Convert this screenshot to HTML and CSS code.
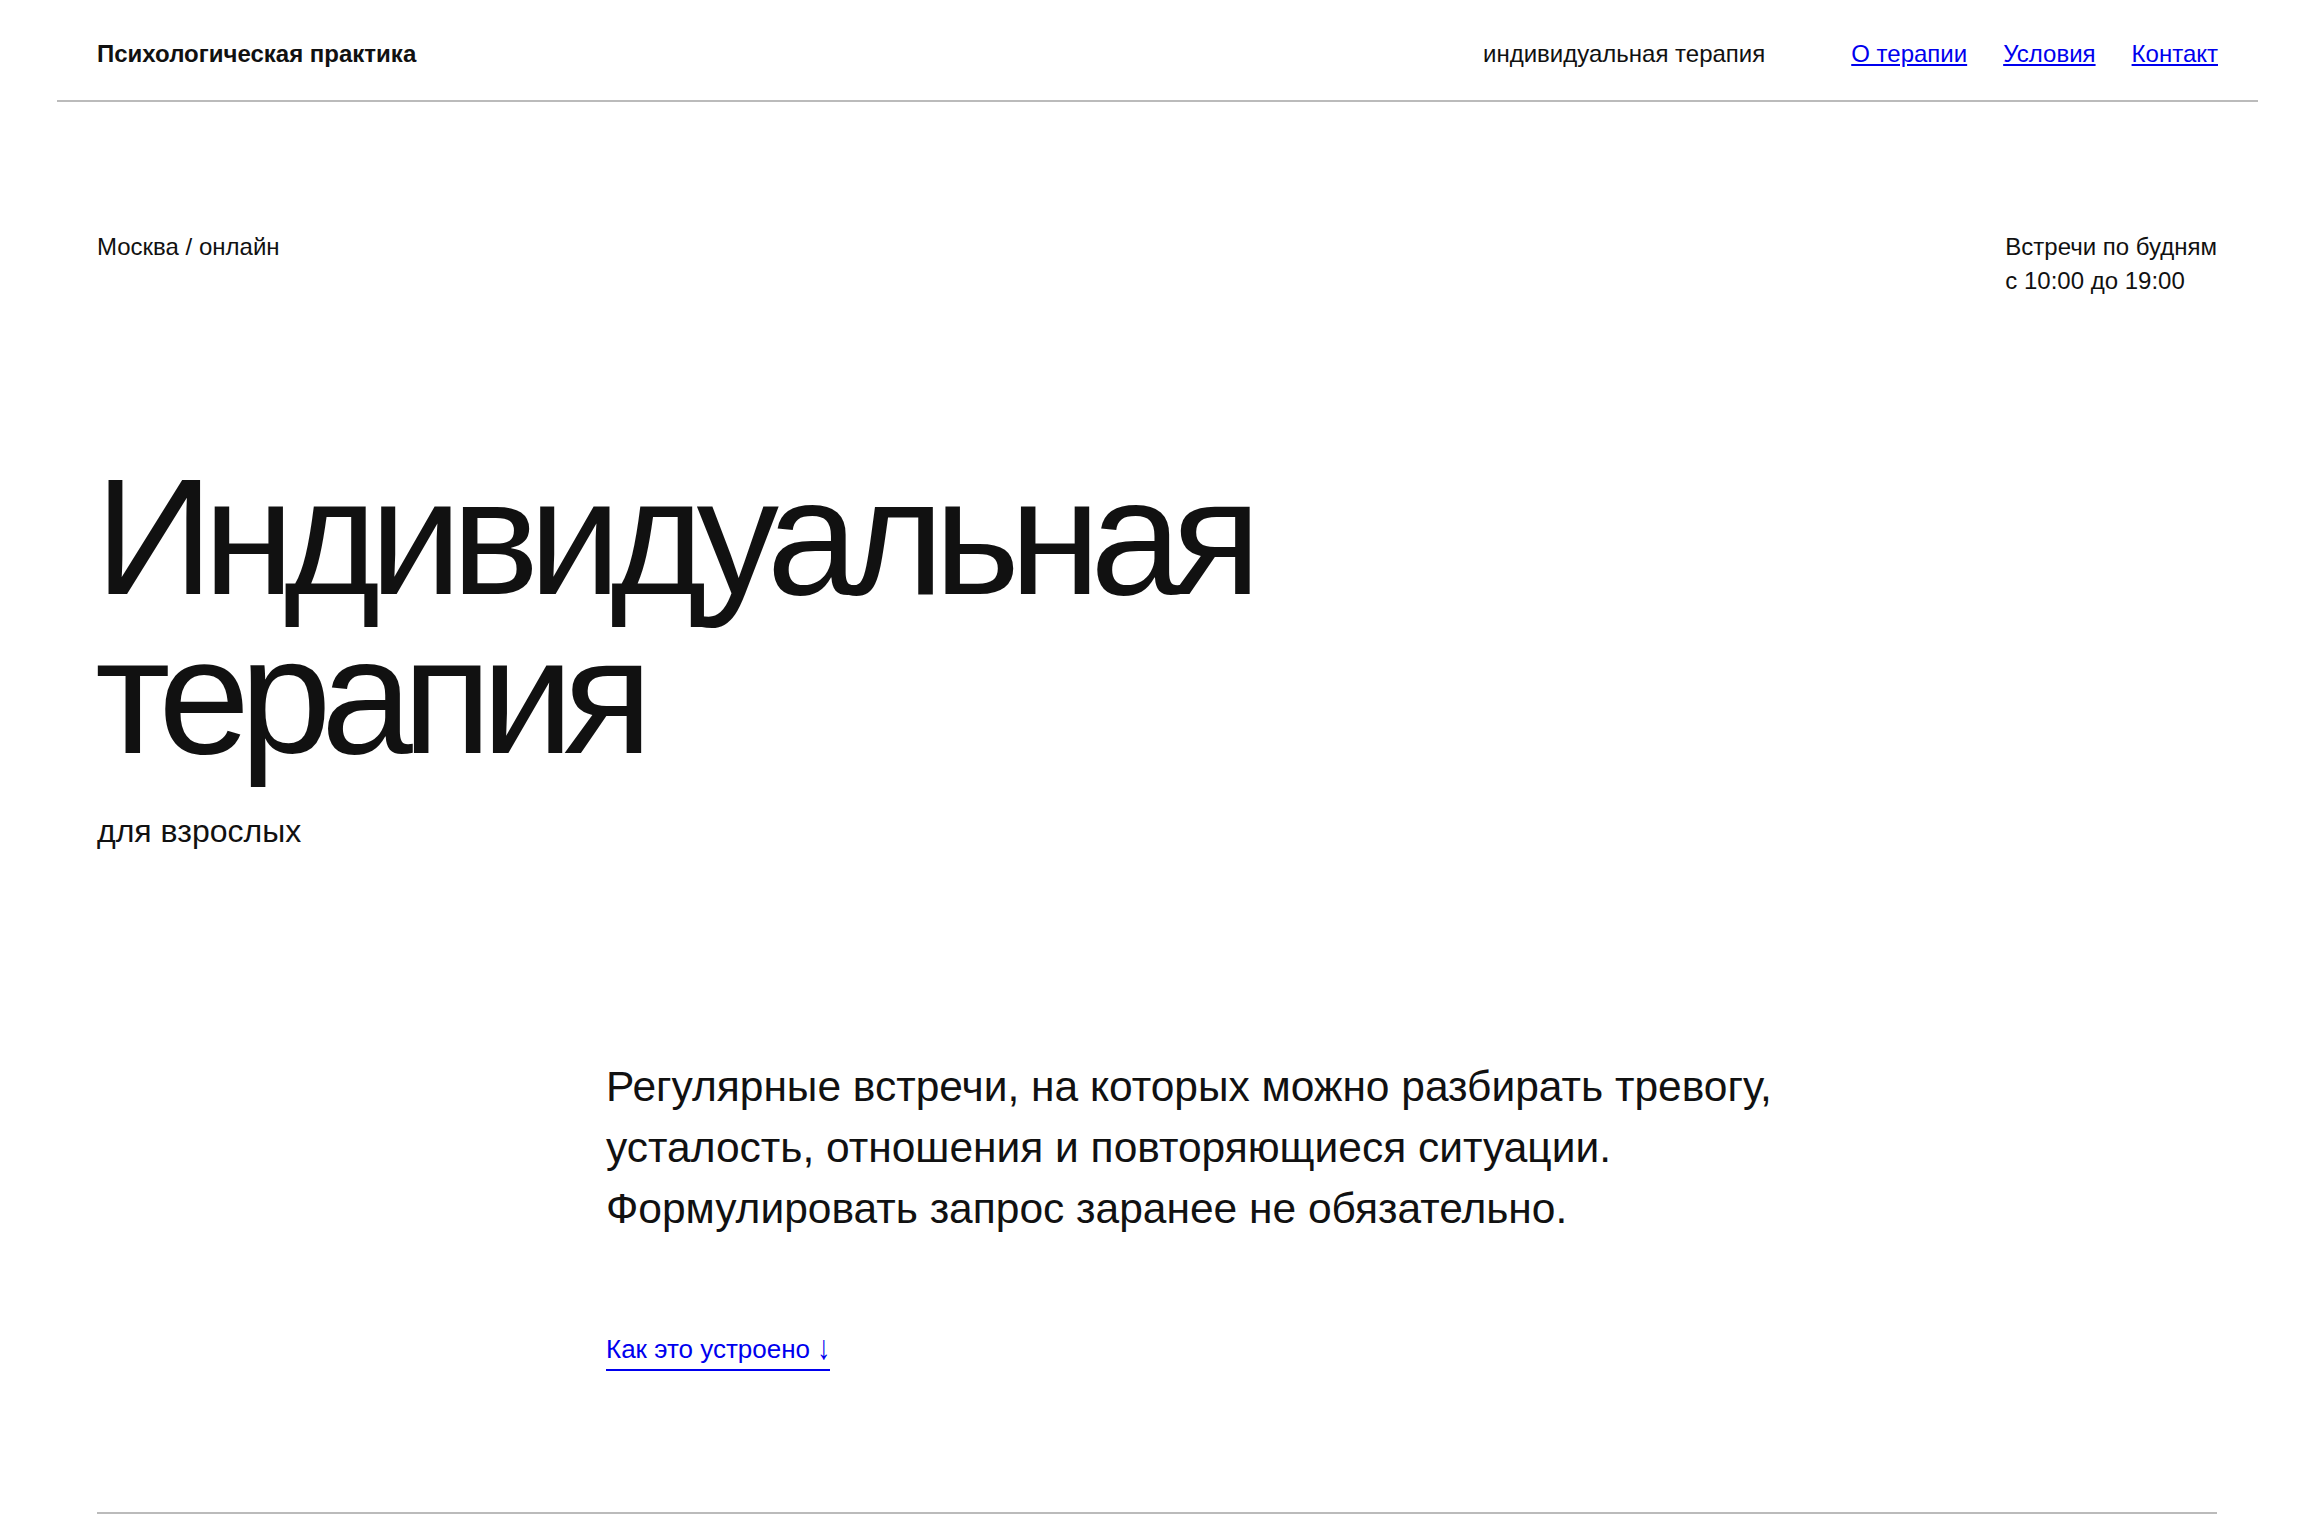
FILE: index.html
```html
<!DOCTYPE html>
<html lang="ru">
<head>
<meta charset="utf-8">
<title>Психологическая практика — индивидуальная терапия</title>
<link rel="stylesheet" href="styles.css">
</head>
<body>
<header class="site-header">
  <div class="logo">Психологическая практика</div>
  <div class="header-right">
    <span class="tagline">индивидуальная терапия</span>
    <nav class="nav">
      <a href="#about">О терапии</a>
      <a href="#terms">Условия</a>
      <a href="#contact">Контакт</a>
    </nav>
  </div>
</header>
<main class="hero">
  <div class="meta">
    <div class="meta-left">Москва / онлайн</div>
    <div class="meta-right">Встречи по будням<br>с 10:00 до 19:00</div>
  </div>
  <h1 class="title">Индивидуальная<br>терапия</h1>
  <p class="subtitle">для взрослых</p>
  <div class="intro">
    <p class="lead">Регулярные встречи, на которых можно разбирать тревогу,<br>усталость, отношения и повторяющиеся ситуации.<br>Формулировать запрос заранее не обязательно.</p>
    <a class="more" href="#about">Как это устроено <span class="arrow">↓</span></a>
  </div>
  <div class="divider"></div>
</main>
</body>
</html>
```

FILE: styles.css
```css
html, body {
  margin: 0;
  padding: 0;
  background: #fff;
}
body {
  font-family: "Liberation Sans", Arial, Helvetica, sans-serif;
  color: #111;
  font-size: 24px;
}
.site-header {
  box-sizing: border-box;
  height: 102px;
  margin: 0 58px 0 57px;
  padding: 8px 40px 0 40px;
  border-bottom: 2px solid #bbb;
  display: flex;
  align-items: center;
  justify-content: space-between;
}
.logo {
  font-weight: 700;
  font-size: 24px;
}
.header-right {
  display: flex;
  align-items: center;
  gap: 86px;
}
.tagline {
  font-size: 24px;
}
.nav {
  display: flex;
  gap: 36px;
}
.nav a {
  color: #0000ee;
  text-decoration: underline;
  font-size: 24px;
}
.hero {
  padding: 0 99px 0 97px;
}
.meta {
  margin-top: 128px;
  display: flex;
  justify-content: space-between;
  align-items: flex-start;
  font-size: 24px;
  line-height: 34px;
}
.meta-right {
  text-align: left;
}
.title {
  margin: 160px 0 0 -2px;
  font-size: 165px;
  line-height: 159px;
  font-weight: 400;
  letter-spacing: -0.063em;
}
.subtitle {
  margin: 35px 0 0 0;
  font-size: 32px;
  line-height: 1.3;
}
.intro {
  margin-left: 509px;
  margin-top: 203px;
}
.lead {
  margin: 0;
  font-size: 42.5px;
  line-height: 61px;
}
.more {
  display: inline-block;
  margin-top: 96px;
  font-size: 26px;
  line-height: 1.15;
  color: #0000ee;
  text-decoration: none;
  padding-bottom: 5px;
  border-bottom: 2px solid #0000ee;
}
.arrow {
  display: inline-block;
  transform: scaleY(1.3);
  transform-origin: 50% 70%;
}
.divider {
  margin-top: 141px;
  border-top: 2px solid #bbb;
}
```
